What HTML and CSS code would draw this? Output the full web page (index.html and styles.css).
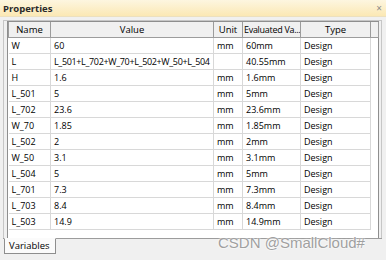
FILE: index.html
```html
<!DOCTYPE html>
<html lang="en">
<head>
    <meta charset="UTF-8">
    <title>Properties</title>
    <link rel="stylesheet" href="styles.css">
</head>
<body>
    <div class="window">
        <div class="titlebar">
            <span class="title">Properties</span>
            <span class="close">×</span>
        </div>
        <div class="body">
            <div class="frame">
                <div class="grid-box">
                    <table class="grid">
                        <colgroup>
                            <col class="c-name"><col class="c-value"><col class="c-unit"><col class="c-eval"><col class="c-type"><col class="c-fill">
                        </colgroup>
                        <thead>
                            <tr><th>Name</th><th>Value</th><th>Unit</th><th class="left">Evaluated Va...</th><th>Type</th><th></th></tr>
                        </thead>
                        <tbody>
                            <tr><td>W</td><td>60</td><td>mm</td><td>60mm</td><td>Design</td><td class="empty"></td></tr>
                            <tr><td>L</td><td class="formula">L_501+L_702+W_70+L_502+W_50+L_504</td><td></td><td>40.55mm</td><td>Design</td><td class="empty"></td></tr>
                            <tr><td>H</td><td>1.6</td><td>mm</td><td>1.6mm</td><td>Design</td><td class="empty"></td></tr>
                            <tr><td>L_501</td><td>5</td><td>mm</td><td>5mm</td><td>Design</td><td class="empty"></td></tr>
                            <tr><td>L_702</td><td>23.6</td><td>mm</td><td>23.6mm</td><td>Design</td><td class="empty"></td></tr>
                            <tr><td>W_70</td><td>1.85</td><td>mm</td><td>1.85mm</td><td>Design</td><td class="empty"></td></tr>
                            <tr><td>L_502</td><td>2</td><td>mm</td><td>2mm</td><td>Design</td><td class="empty"></td></tr>
                            <tr><td>W_50</td><td>3.1</td><td>mm</td><td>3.1mm</td><td>Design</td><td class="empty"></td></tr>
                            <tr><td>L_504</td><td>5</td><td>mm</td><td>5mm</td><td>Design</td><td class="empty"></td></tr>
                            <tr><td>L_701</td><td>7.3</td><td>mm</td><td>7.3mm</td><td>Design</td><td class="empty"></td></tr>
                            <tr><td>L_703</td><td>8.4</td><td>mm</td><td>8.4mm</td><td>Design</td><td class="empty"></td></tr>
                            <tr><td>L_503</td><td>14.9</td><td>mm</td><td>14.9mm</td><td>Design</td><td class="empty"></td></tr>
                        </tbody>
                    </table>
                </div>
            </div>
            <div class="tabs">
                <span class="tab">Variables</span>
            </div>
        </div>
        <div class="watermark">CSDN @SmallCloud#</div>
    </div>
</body>
</html>
```

FILE: styles.css
```css
body {
    margin: 0;
    font-family: "Open Sans", "Noto Sans", Arial, sans-serif;
    font-size: 9px;
    color: #000;
    background: #f0f0f0;
}
.window {
    position: relative;
    width: 386px;
    height: 260px;
    background: #f0f0f0;
    overflow: hidden;
}
.titlebar {
    height: 16px;
    display: flex;
    align-items: center;
    justify-content: space-between;
    padding: 0 4px 0 3px;
    background: linear-gradient(#fdf6e0, #fbe8b4);
    border-bottom: 1px solid #ece0bf;
}
.title {
    font-weight: bold;
    font-size: 9.5px;
    color: #2a2a2a;
}
.close {
    color: #8a8a8a;
    font-size: 10px;
}
.body {
    padding: 3px 4px 0 3px;
}
.frame {
    border: 1px solid #c6c6c6;
    border-bottom: none;
    background: #f0f0f0;
    padding: 0 2px 0 3px;
}
.grid-box {
    height: 216px;
    background: #fff;
    border: 1px solid #8e8e8e;
    border-bottom: none;
}
.grid {
    border-collapse: collapse;
    table-layout: fixed;
    width: 370px;
}
.c-name { width: 42px; }
.c-value { width: 163px; }
.c-unit { width: 29px; }
.c-eval { width: 58px; }
.c-type { width: 70px; }
.c-fill { width: 8px; }
.grid th {
    height: 15px;
    padding: 0 2px;
    font-weight: normal;
    font-size: 9.5px;
    background: #f0f0f0;
    border: 1px solid #9c9c9c;
    border-top: none;
    white-space: nowrap;
    overflow: hidden;
}
.grid th.left {
    text-align: left;
    font-size: 9px;
    letter-spacing: -0.3px;
    padding: 0 1px;
}
.grid td {
    height: 15px;
    padding: 0 3px;
    font-size: 9px;
    border: 1px solid #d8d8d8;
    border-top: none;
    white-space: nowrap;
    overflow: hidden;
}
.grid td.formula {
    letter-spacing: -0.35px;
    padding-right: 0;
}
.grid td:first-child {
    border-left: none;
}
.grid td.empty {
    border: none;
    border-left: 1px solid #d8d8d8;
}
.tabs {
    height: 17px;
    border-top: 1px solid #9c9c9c;
    display: flex;
    padding-left: 1px;
}
.tab {
    margin-top: -1px;
    padding: 0 5px 0 4px;
    height: 14px;
    line-height: 14px;
    background: #fbfbfb;
    border: 1px solid #8e8e8e;
    border-top: 1px solid #fbfbfb;
    font-size: 9.5px;
}
.watermark {
    position: absolute;
    left: 218px;
    top: 234px;
    font-family: "Liberation Sans", Arial, sans-serif;
    font-size: 15px;
    color: #a0a0a0;
    text-shadow: 0 0 2px #fff, 0 0 2px #fff;
}
```
